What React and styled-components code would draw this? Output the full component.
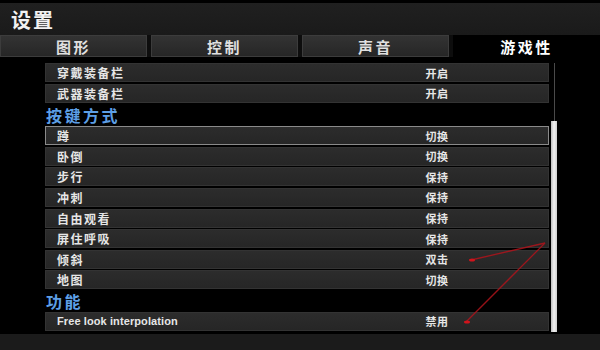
import React from 'react';
import styled, { createGlobalStyle } from 'styled-components';

const GlobalStyle = createGlobalStyle`
  html, body {
    margin: 0;
    padding: 0;
    background: #000;
  }
  body {
    font-family: "Noto Sans", "Noto Sans CJK SC", sans-serif;
  }
`;

const Screen = styled.div`
  width: 600px;
  height: 350px;
  background: #000;
  display: flex;
  flex-direction: column;
  overflow: hidden;
  position: relative;
`;

const Header = styled.div`
  height: 32px;
  margin-top: 3px;
  background: linear-gradient(#202020, #1a1a1a);
  display: flex;
  align-items: center;
  padding-left: 11px;
  color: #f2f2f2;
  font-size: 20px;
  font-weight: 700;
  letter-spacing: 2px;
  font-family: "Noto Sans CJK SC", sans-serif;
`;

const TabBar = styled.div`
  height: 22px;
  display: flex;
  gap: 4px;
  background: #0d0d0d;
`;

const Tab = styled.div`
  flex: 1;
  display: flex;
  align-items: center;
  justify-content: center;
  font-family: "Noto Sans CJK SC", sans-serif;
  font-size: 15px;
  font-weight: 700;
  letter-spacing: 2.5px;
  color: ${p => (p.$active ? '#fff' : '#e0e0e0')};
  background: ${p => (p.$active ? '#000' : 'linear-gradient(#333, #262626)')};
  border: 1px solid ${p => (p.$active ? '#000' : '#3c3c3c')};
  box-sizing: border-box;
`;

const Content = styled.div`
  flex: 1;
  display: flex;
  padding-top: 6px;
`;

const Gutter = styled.div`
  width: 45px;
`;

const List = styled.div`
  width: 504px;
  display: flex;
  flex-direction: column;
`;

const Row = styled.div`
  height: 19px;
  margin-bottom: 1.6px;
  box-sizing: border-box;
  display: grid;
  grid-template-columns: 1fr 100px 61px;
  align-items: center;
  background: linear-gradient(#2c2c2c, #262626);
  border: 1px solid ${p => (p.$selected ? '#8a8a8a' : '#333')};
  font-weight: 700;
  color: #e6e6e6;
  font-family: "Noto Sans CJK SC", sans-serif;
`;

const Label = styled.span`
  padding-left: 11px;
  font-family: ${p => (p.$latin ? '"Liberation Sans", sans-serif' : '"Noto Sans CJK SC", sans-serif')};
  font-size: ${p => (p.$latin ? '11px' : '12px')};
  letter-spacing: ${p => (p.$latin ? '0.1px' : '1.5px')};
`;

const Value = styled.span`
  text-align: center;
  font-size: 11px;
  letter-spacing: 0.5px;
`;

const Section = styled.div`
  height: ${p => p.$h}px;
  display: flex;
  align-items: center;
  padding-left: 1px;
  font-family: "Noto Sans CJK SC", sans-serif;
  font-size: 16px;
  font-weight: 700;
  letter-spacing: 2.5px;
  color: #5d9fe6;
`;

const Scroll = styled.div`
  width: 8px;
  margin-left: 1px;
  display: flex;
  flex-direction: column;
  align-items: center;
  padding-bottom: 2px;
`;

const Track = styled.div`
  width: 1px;
  height: 58px;
  background: #4a4a4a;
`;

const Thumb = styled.div`
  width: 6px;
  flex: 1;
  background: linear-gradient(90deg, #bdbdbd, #f2f2f2, #cfcfcf);
`;

const Footer = styled.div`
  height: 16px;
  background: #1b1b1b;
`;

const Arrows = styled.svg`
  position: absolute;
  left: 0;
  top: 0;
  pointer-events: none;
`;

const top = [
  ['穿戴装备栏', '开启'],
  ['武器装备栏', '开启'],
];

const keys = [
  ['蹲', '切换'],
  ['卧倒', '切换'],
  ['步行', '保持'],
  ['冲刺', '保持'],
  ['自由观看', '保持'],
  ['屏住呼吸', '保持'],
  ['倾斜', '双击'],
  ['地图', '切换'],
];

const App = () => (
  <>
    <GlobalStyle />
    <Screen>
      <Header>设置</Header>
      <TabBar>
        <Tab>图形</Tab>
        <Tab>控制</Tab>
        <Tab>声音</Tab>
        <Tab $active>游戏性</Tab>
      </TabBar>
      <Content>
        <Gutter />
        <List>
          {top.map(([l, v]) => (
            <Row key={l}>
              <Label>{l}</Label>
              <Value>{v}</Value>
            </Row>
          ))}
          <Section $h={22}>按键方式</Section>
          {keys.map(([l, v], i) => (
            <Row key={l} $selected={i === 0}>
              <Label>{l}</Label>
              <Value>{v}</Value>
            </Row>
          ))}
          <Section $h={21}>功能</Section>
          <Row>
            <Label $latin>Free look interpolation</Label>
            <Value>禁用</Value>
          </Row>
        </List>
        <Scroll>
          <Track />
          <Thumb />
        </Scroll>
      </Content>
      <Footer />
      <Arrows width="600" height="350">
        <g stroke="#b0141c" strokeWidth="1.3" fill="none" opacity="0.85">
          <line x1="545" y1="243" x2="471" y2="260" />
          <line x1="545" y1="243" x2="466" y2="322" />
        </g>
        <g fill="#d0141c">
          <ellipse cx="472" cy="260" rx="3" ry="1.5" />
          <ellipse cx="467" cy="322" rx="3" ry="1.5" />
        </g>
      </Arrows>
    </Screen>
  </>
);

export default App;
